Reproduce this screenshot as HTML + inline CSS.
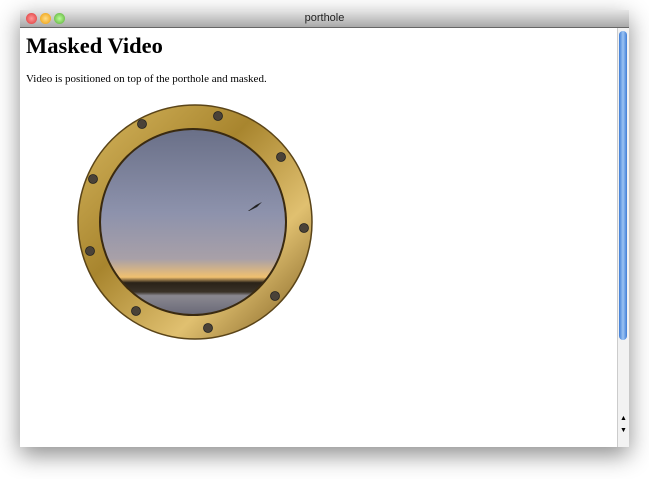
<!DOCTYPE html>
<html><head><style>
body{margin:0;width:649px;height:479px;background:#fff;position:relative;overflow:hidden;font-family:"Liberation Serif",serif}
.win{position:absolute;left:20px;top:10px;width:609px;height:437px;box-shadow:0 8px 22px rgba(0,0,0,.45);background:#fff}
.title{height:17px;background:linear-gradient(#e6e6e6,#a9a9a9);border-bottom:1px solid #666;font:11px "Liberation Sans",sans-serif;text-align:center;line-height:17px;color:#222}
.dot{position:absolute;top:3px;width:11px;height:11px;border-radius:50%}
h1{position:absolute;left:6px;top:23px;margin:0;font-size:22.5px;font-weight:bold}
p{position:absolute;left:6px;top:63px;margin:0;font-size:11px}
.sb{position:absolute;right:0;top:18px;width:11px;height:419px;background:#f2f2f2;border-left:1px solid #ccc}
.thumb{position:absolute;left:1px;top:3px;width:8px;height:309px;border-radius:5px;background:linear-gradient(90deg,#3f7dd6,#9cc4f3,#3f7dd6)}
</style></head><body>
<div class="win">
<div class="title">porthole
<div class="dot" style="left:6px;background:radial-gradient(#f99,#d33)"></div>
<div class="dot" style="left:20px;background:radial-gradient(#fd8,#e90)"></div>
<div class="dot" style="left:34px;background:radial-gradient(#bf9,#5a3)"></div></div>
<h1>Masked Video</h1>
<p>Video is positioned on top of the porthole and masked.</p>
<div class="sb"><div class="thumb"></div>
<div style="position:absolute;top:386px;left:2px;font-size:7px">▲</div>
<div style="position:absolute;top:398px;left:2px;font-size:7px">▼</div></div>
</div>
<svg style="position:absolute;left:0;top:0" width="649" height="479">
<defs>
<linearGradient id="br" x1="0" y1="0" x2="1" y2="1"><stop offset="0" stop-color="#d8b860"/><stop offset=".4" stop-color="#a8852e"/><stop offset=".7" stop-color="#e0c070"/><stop offset="1" stop-color="#7a5a1e"/></linearGradient>
<linearGradient id="sky" x1="0" y1="0" x2="0" y2="1"><stop offset="0" stop-color="#6a7088"/><stop offset=".45" stop-color="#8d92ac"/><stop offset=".7" stop-color="#a8a0a8"/><stop offset=".8" stop-color="#f0c070"/><stop offset=".83" stop-color="#2a2218"/><stop offset=".88" stop-color="#3a3228"/><stop offset=".9" stop-color="#8a8890"/><stop offset="1" stop-color="#6a6a78"/></linearGradient>
</defs>
<circle cx="195" cy="222" r="117" fill="url(#br)" stroke="#5a4418" stroke-width="1.5"/>
<circle cx="193" cy="222" r="94" fill="#3a2a10"/>
<circle cx="193" cy="222" r="92" fill="url(#sky)"/>
<path d="M248 211 l8-6 6-3 -5 5 -8 4z" fill="#222"/>
<g fill="#4a4238" stroke="#222" stroke-width=".8">
<circle cx="142" cy="124" r="4.5"/><circle cx="218" cy="116" r="4.5"/><circle cx="281" cy="157" r="4.5"/><circle cx="304" cy="228" r="4.5"/><circle cx="275" cy="296" r="4.5"/><circle cx="208" cy="328" r="4.5"/><circle cx="136" cy="311" r="4.5"/><circle cx="90" cy="251" r="4.5"/><circle cx="93" cy="179" r="4.5"/></g>
</svg>
</body></html>
